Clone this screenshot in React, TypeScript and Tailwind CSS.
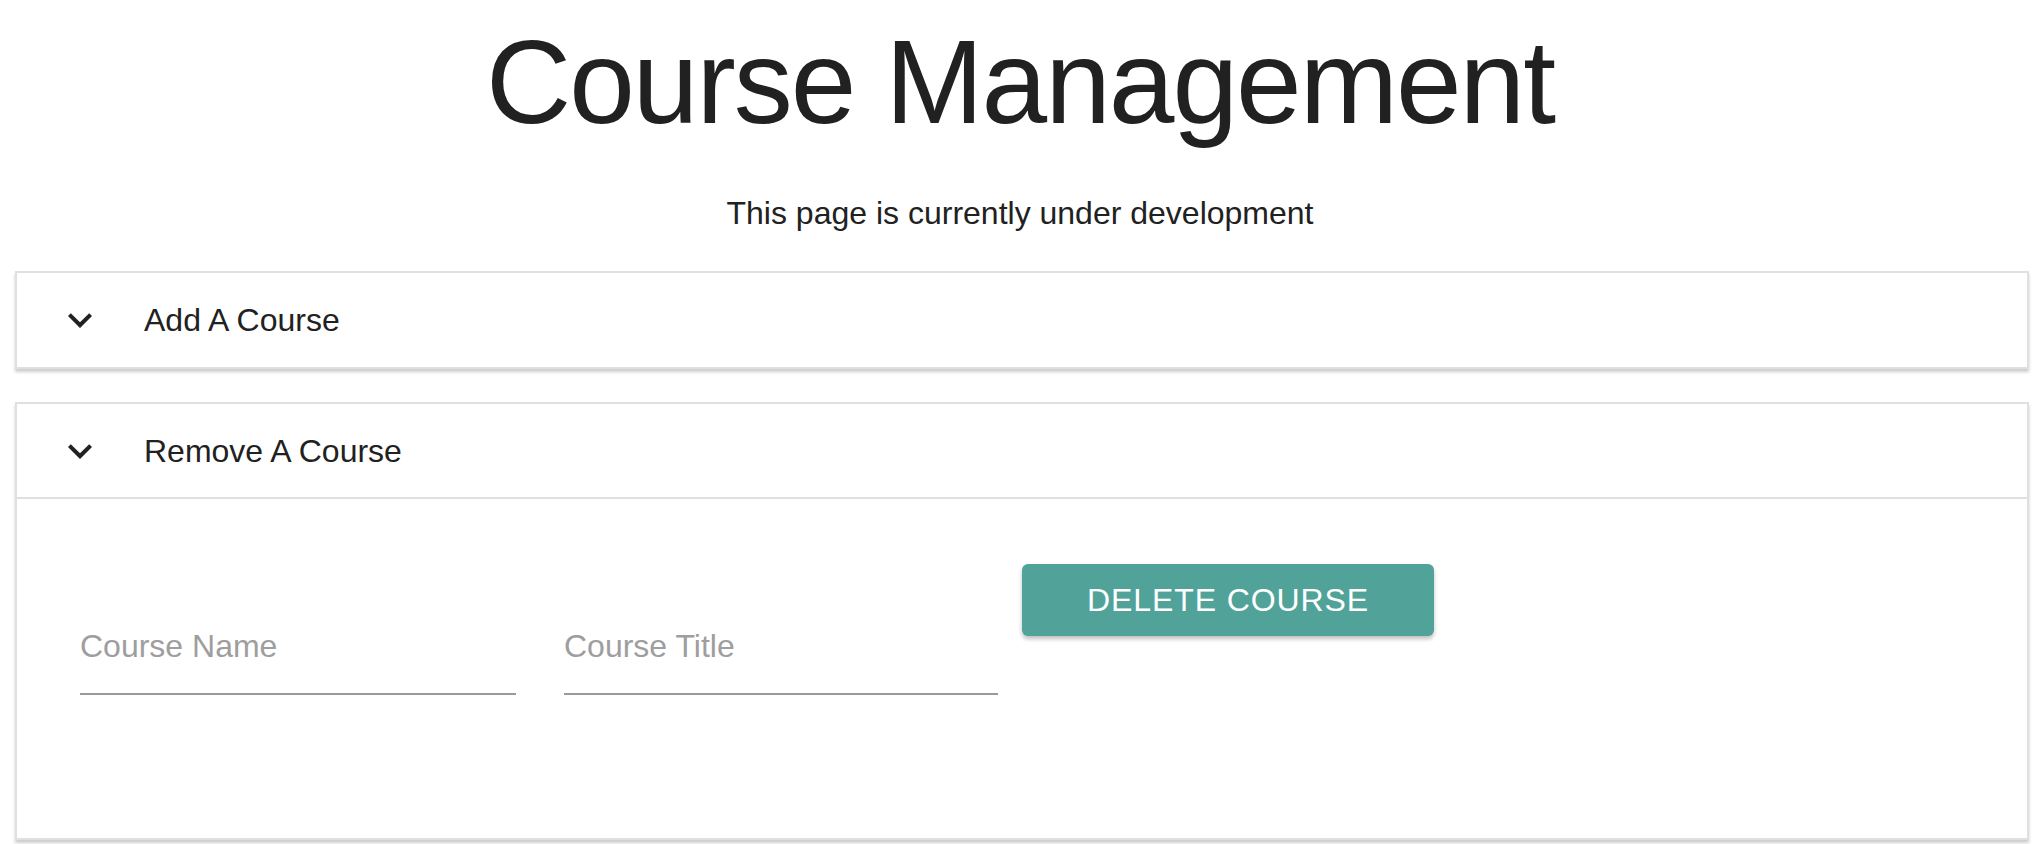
import { useState } from "react";

function ExpandIcon() {
  return (
    <svg viewBox="0 0 24 24" className="h-12 w-12 shrink-0 fill-[#212121]">
      <path d="M16.59 8.59 12 13.17 7.41 8.59 6 10l6 6 6-6z" />
    </svg>
  );
}

function Field({ label, width }: { label: string; width: string }) {
  return (
    <div className={`mt-[123px] ${width} border-b-2 border-[#9a9a9a] pb-[23px]`}>
      <p className="text-[32px] leading-[48px] text-[#9e9e9e]">{label}</p>
    </div>
  );
}

export default function App() {
  const [open, setOpen] = useState({ add: false, remove: true });

  return (
    <main className="min-h-screen bg-white text-[#212121] [font-family:'Liberation_Sans',Arial,sans-serif]">
      <h1 className="mt-[10px] text-center text-[118px] font-normal leading-[144px] tracking-[-2px]">Course Management</h1>
      <p className="mt-[35px] text-center text-[32px] leading-[48px]">This page is currently under development</p>

      <section className="ml-[15px] mr-[11px] mt-[34px]">
        <div className="h-[98px] border-2 border-[#e0e0e0] bg-white shadow-[0_3px_3px_rgba(0,0,0,0.2)]">
          <button
            onClick={() => setOpen({ ...open, add: !open.add })}
            className="flex h-full w-full items-center pl-[39px] text-left"
          >
            <ExpandIcon />
            <span className="ml-[40px] text-[32px] leading-none">Add A Course</span>
          </button>
        </div>

        <div className="mt-[33px] h-[438px] border-2 border-[#e0e0e0] bg-white shadow-[0_3px_3px_rgba(0,0,0,0.2)]">
          <button
            onClick={() => setOpen({ ...open, remove: !open.remove })}
            className="flex h-[95px] w-full items-center border-b-2 border-[#e0e0e0] pl-[39px] text-left"
          >
            <ExpandIcon />
            <span className="ml-[40px] text-[32px] leading-none">Remove A Course</span>
          </button>
          <div className="flex items-start pl-[63px]">
            <Field label="Course Name" width="w-[436px]" />
            <div className="ml-[48px]">
              <Field label="Course Title" width="w-[434px]" />
            </div>
            <button className="ml-[24px] mt-[65px] flex h-[72px] w-[412px] items-center justify-center rounded-[6px] bg-[#51a39a] text-[32px] tracking-[0.9px] text-white shadow-[0_3px_4px_rgba(0,0,0,0.25)]">
              DELETE COURSE
            </button>
          </div>
        </div>
      </section>
    </main>
  );
}
